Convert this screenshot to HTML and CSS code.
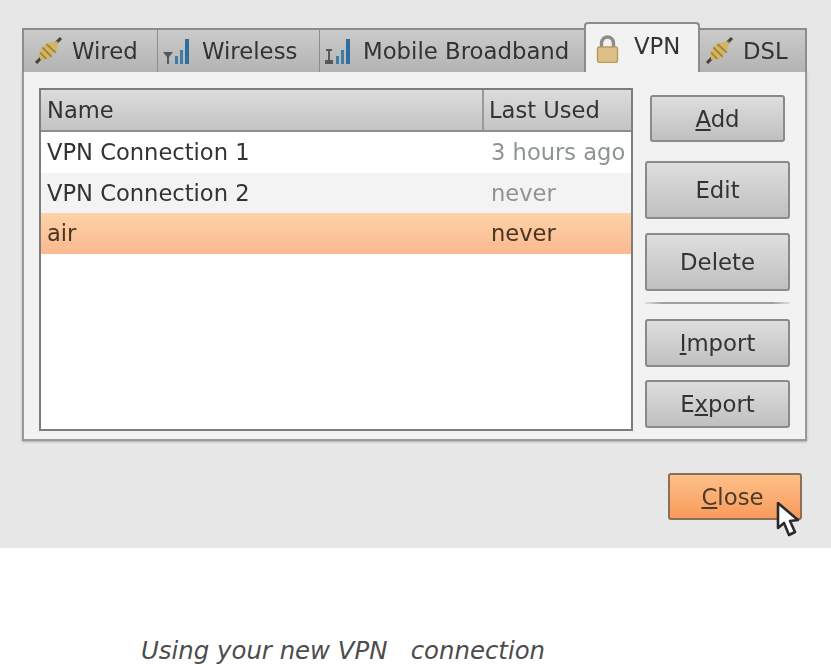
FILE: index.html
```html
<!DOCTYPE html>
<html lang="en">
<head>
<meta charset="utf-8">
<title>VPN Connections</title>
<link rel="stylesheet" href="styles.css">
</head>
<body>
<main class="shot">
  <div class="notebook">
    <div class="tabs">
      <div class="tab tab-wired">
        <svg class="ic ic-plug" viewBox="0 0 26 26"><path d="M1 25 L6 20 M19 7 L25 1" stroke="#4a4436" stroke-width="3"/><path d="M4 15 L11 6 L22 4 L21 12 L13 21 L5 22 Z" fill="#d3b565"/><path d="M7 10 L16 19 M11 7 L20 15 M5 15 L11 21" stroke="#a08537" stroke-width="1.8"/></svg>
        <span>Wired</span>
      </div>
      <div class="tab tab-wireless">
        <svg class="ic ic-bars" viewBox="0 0 30 28"><path d="M1 15 H11 L7 20 V27 H5 V20 Z" fill="#55585a"/><path d="M13 19 h3 v8 h-3 Z M18 13 h3 v14 h-3 Z" fill="#3f7ca6"/><path d="M23 2 h4 v25 h-4 Z" fill="#2f6f9f"/></svg>
        <span>Wireless</span>
      </div>
      <div class="tab tab-mobile">
        <svg class="ic ic-bars" viewBox="0 0 30 28"><path d="M3 12 h6 v2 h-2 v9 h3 v4 h-8 v-4 h3 v-9 h-2 Z" fill="#55585a"/><path d="M13 19 h3 v8 h-3 Z M18 13 h3 v14 h-3 Z" fill="#3f7ca6"/><path d="M23 2 h4 v25 h-4 Z" fill="#2f6f9f"/></svg>
        <span>Mobile Broadband</span>
      </div>
      <div class="tab tab-vpn">
        <svg class="ic ic-lock" viewBox="0 0 22 28"><path d="M5 13 V8 A6 6 0 0 1 17 8 V13" fill="none" stroke="#8d8d85" stroke-width="3.4"/><rect x="1" y="12" width="20" height="15.5" rx="2" fill="#dcc088" stroke="#b89a5c" stroke-width="1.4"/></svg>
        <span>VPN</span>
      </div>
      <div class="tab tab-dsl">
        <svg class="ic ic-plug" viewBox="0 0 26 26"><path d="M1 25 L6 20 M19 7 L25 1" stroke="#4a4436" stroke-width="3"/><path d="M4 15 L11 6 L22 4 L21 12 L13 21 L5 22 Z" fill="#d3b565"/><path d="M7 10 L16 19 M11 7 L20 15 M5 15 L11 21" stroke="#a08537" stroke-width="1.8"/></svg>
        <span>DSL</span>
      </div>
    </div>
    <div class="panel">
      <div class="list">
        <div class="row head"><div class="name">Name</div><div class="used">Last Used</div></div>
        <div class="row"><div class="name">VPN Connection 1</div><div class="used dim">3 hours ago</div></div>
        <div class="row alt"><div class="name">VPN Connection 2</div><div class="used dim">never</div></div>
        <div class="row sel"><div class="name">air</div><div class="used">never</div></div>
      </div>
      <div class="actions">
        <button class="btn btn-add"><u>A</u>dd</button>
        <button class="btn btn-tall btn-edit">Edit</button>
        <button class="btn btn-tall btn-delete">Delete</button>
        <div class="sep"></div>
        <button class="btn btn-short btn-import"><u>I</u>mport</button>
        <button class="btn btn-short btn-export">E<u>x</u>port</button>
      </div>
    </div>
  </div>
  <div class="footer">
    <button class="btn close"><u>C</u>lose
      <svg class="cursor" viewBox="0 0 24 36"><path d="M2 1 L2 26 L8 21 L13 33 L19 30 L14 19 L22 18 Z" fill="#fff" stroke="#2b2b2b" stroke-width="2.6" stroke-linejoin="round"/></svg>
    </button>
  </div>
</main>
<p class="caption">Using your new VPN &nbsp; connection</p>
</body>
</html>
```

FILE: styles.css
```css
html, body {
  margin: 0;
  padding: 0;
  background: #fff;
}
body {
  width: 831px;
  height: 665px;
  overflow: hidden;
  font-family: "DejaVu Sans", sans-serif;
  color: #333;
}
.shot {
  height: 548px;
  box-sizing: border-box;
  padding: 22px 24px 0 22px;
  background: #e7e7e7;
  filter: blur(0.6px);
}
.notebook {
  width: 785px;
}
.tabs {
  display: flex;
  align-items: flex-end;
  height: 50px;
  font-size: 22.8px;
}
.tab {
  box-sizing: border-box;
  flex: none;
  height: 44px;
  display: flex;
  align-items: center;
  gap: 10px;
  padding: 0 0 1px 3px;
  background: linear-gradient(#cbcbcb, #b3b3b3);
  border-top: 2px solid #8c8c8c;
  border-right: 1px solid #8c8c8c;
}
.tab-wired { width: 136px; padding-left: 11px; border-left: 2px solid #8c8c8c; }
.tab-wireless { width: 162px; padding-left: 4px; }
.tab-mobile { width: 264px; border-right: 0; }
.tab-vpn {
  width: 116px;
  height: 50px;
  padding: 0 0 4px 10px;
  gap: 15px;
  background: #f2f2f2;
  border: 2px solid #8c8c8c;
  border-bottom: 0;
  border-radius: 4px 4px 0 0;
}
.tab-dsl { width: 107px; padding-left: 6px; border-right: 2px solid #8c8c8c; }
.ic { flex: none; }
.ic-plug { width: 27px; height: 27px; }
.ic-bars { width: 30px; height: 28px; }
.ic-lock { width: 23px; height: 28px; margin-top: 6px; }
.panel {
  box-sizing: border-box;
  height: 369px;
  display: flex;
  align-items: flex-start;
  padding: 16px 0 0 15px;
  background: #f2f2f2;
  border: 2px solid #9a9a9a;
  border-top: 0;
  box-shadow: 0 1px 2px #aaa;
}
.list {
  box-sizing: border-box;
  flex: none;
  width: 594px;
  height: 343px;
  background: #fff;
  border: 2px solid #7d7d7d;
  font-size: 22.6px;
}
.row {
  display: flex;
  height: 40.5px;
  align-items: center;
}
.head {
  box-sizing: border-box;
  height: 42px;
  background: linear-gradient(#dcdcdc, #c4c4c4);
  border-bottom: 2px solid #8f8f8f;
}
.alt { background: #f3f3f3; }
.sel {
  background: linear-gradient(#fdd2a8, #fdb891);
  color: #4a3522;
}
.name {
  width: 441px;
  box-sizing: border-box;
  padding-left: 6px;
}
.used {
  flex: 1;
  padding-left: 9px;
}
.head .used {
  align-self: stretch;
  display: flex;
  align-items: center;
  border-left: 2px solid #9a9a9a;
  padding-left: 5px;
}
.dim { color: #8e9496; }
.actions {
  display: flex;
  flex: none;
  flex-direction: column;
  width: 145px;
  margin-left: 12px;
}
.btn {
  display: block;
  box-sizing: border-box;
  font: inherit;
  font-size: 22.8px;
  color: #333;
  padding: 0;
  background: linear-gradient(#dedede, #c0c0c0);
  border: 2px solid #8a8a8a;
  border-radius: 3px;
}
.btn-add {
  width: 135px;
  height: 47px;
  margin: 7px 0 19px 5px;
}
.btn-tall { width: 145px; height: 58px; }
.btn-edit { margin-bottom: 14px; }
.sep {
  height: 2px;
  margin: 11px 0 15px;
  background: linear-gradient(90deg, #e0e0e0, #a0a0a0 12%, #a0a0a0 88%, #e0e0e0);
}
.btn-short { width: 145px; height: 48px; }
.btn-import { margin-bottom: 13px; }
.footer {
  display: flex;
  justify-content: flex-end;
  margin-top: 32px;
  padding-right: 5px;
}
.close {
  position: relative;
  width: 134px;
  height: 47px;
  padding-right: 5px;
  text-align: center;
  background: linear-gradient(#fdc188, #fa9a5c);
  border-color: #8a7058;
  color: #4b3b2f;
}
.cursor {
  position: absolute;
  left: 106px;
  top: 27px;
  width: 24px;
  height: 36px;
}
.caption {
  margin: 89px 0 0 141px;
  font-size: 24.4px;
  line-height: 28px;
  font-style: italic;
  color: #4c4c4c;
  white-space: pre;
}
```
